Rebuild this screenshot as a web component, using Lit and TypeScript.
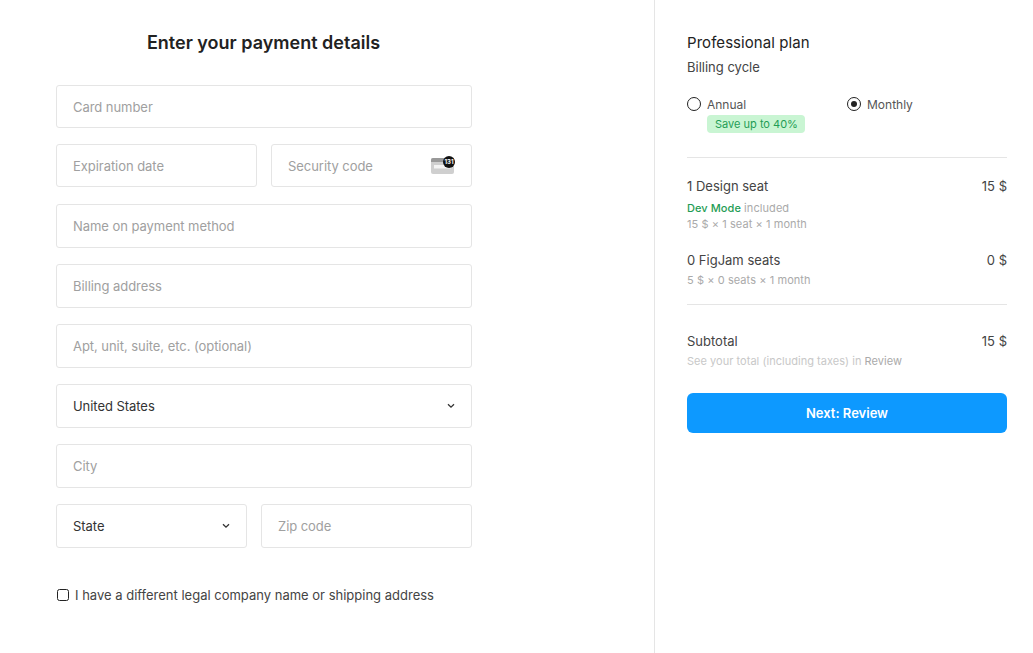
import { LitElement, html, css } from "lit";
import { customElement } from "lit/decorators.js";

const chevron = html`<svg class="chev" width="8" height="6" viewBox="0 0 8 6"><path d="M1 1.2 L4 4.2 L7 1.2" fill="none" stroke="#333" stroke-width="1.3"/></svg>`;

@customElement("app-root")
export class AppRoot extends LitElement {
  static styles = css`
    :host { display: block; height: 653px; font-family: Inter, "Liberation Sans", sans-serif; color: #333; background: #fff; overflow: hidden; }
    * { box-sizing: border-box; }
    .page { display: flex; height: 653px; }
    .left { width: 655px; flex: none; border-right: 1px solid #e5e5e5; padding: 32px 0 0 56px; }
    h1 { width: 415px; margin: 0 0 31px; font-size: 18px; line-height: 22px; font-weight: 600; text-align: center; color: #222; }
    .form { width: 416px; display: flex; flex-direction: column; }
    .row { display: flex; gap: 14px; margin-bottom: 16px; }
    .row.mid { margin-bottom: 17px; }
    .row.last { margin-bottom: 0; }
    .field { flex: 1; height: 44px; border: 1px solid #e5e5e5; border-radius: 3px; padding: 0 16px; display: flex; align-items: center; justify-content: space-between; font-size: 13px; letter-spacing: -0.05px; color: #333; }
    .field.short { height: 43px; }
    .ph { color: #a0a0a0; }
    .w201 { flex: 0 0 201px; }
    .w191 { flex: 0 0 191px; }
    .sec { width: 24px; height: 19px; flex: none; }
    .check { display: flex; align-items: center; gap: 6px; margin-top: 39px; font-size: 13px; color: #444; padding-left: 1px; }
    .box { width: 12px; height: 12px; border: 1.5px solid #222; border-radius: 2.5px; flex: none; }
    .right { flex: none; width: 352px; padding: 33px 0 0 32px; font-size: 13px; }
    .inner { width: 320px; }
    h2 { margin: 0; font-size: 15px; line-height: 20px; font-weight: 400; letter-spacing: 0.06px; color: #222; }
    .cycle { margin-top: 4px; line-height: 20px; font-size: 13px; color: #444; }
    .radios { display: flex; margin-top: 19px; }
    .radio-col { width: 160px; }
    .radio { display: flex; align-items: center; gap: 6px; height: 16px; font-size: 12px; color: #555; }
    .dot { width: 14px; height: 14px; border: 1.5px solid #222; border-radius: 50%; flex: none; display: flex; align-items: center; justify-content: center; }
    .dot i { display: block; width: 6px; height: 6px; background: #222; border-radius: 50%; }
    .save { display: inline-block; width: 98px; margin: 3px 0 0 20px; height: 18px; line-height: 18px; padding: 0 8px; font-size: 11px; white-space: nowrap; background: #c9f5d3; color: #1f9d55; border-radius: 4px; }
    hr { border: 0; border-top: 1px solid #e5e5e5; margin: 0; }
    .sep1 { margin-top: 24px; }
    .item { display: flex; justify-content: space-between; line-height: 18px; color: #444; }
    .item1 { margin-top: 19px; }
    .note { font-size: 11px; line-height: 16px; color: #aaa; letter-spacing: 0.07px; }
    .note b { font-weight: 500; color: #1f9d55; }
    .mt5 { margin-top: 5px; }
    .mt3 { margin-top: 3px; }
    .item2 { margin-top: 19px; }
    .sep2 { margin-top: 16px; }
    .item3 { margin-top: 27px; }
    .note.light { color: #c8c8c8; margin-top: 3px; letter-spacing: 0.03px; }
    .note.light span { color: #aaa; }
    .btn { margin-top: 24px; height: 40px; border-radius: 6px; background: #0d99ff; color: #fff; font-weight: 600; font-size: 13px; display: flex; align-items: center; justify-content: center; }
  `;

  render() {
    return html`<div class="page">
      <div class="left">
        <h1>Enter your payment details</h1>
        <div class="form">
          <div class="row"><div class="field short"><span class="ph">Card number</span></div></div>
          <div class="row mid">
            <div class="field short w201"><span class="ph">Expiration date</span></div>
            <div class="field short"><span class="ph">Security code</span>
              <svg class="sec" viewBox="0 0 24 19">
                <rect x="0" y="2" width="23" height="16" rx="2" fill="#cfcfcf"/>
                <path d="M0 6 V4 a2 2 0 0 1 2-2 H23 V6 Z" fill="#999"/>
                <rect x="3" y="9" width="17" height="3.5" fill="#f4f4f4"/>
                <circle cx="18" cy="6" r="6" fill="#111"/>
                <text x="18" y="8.2" font-size="6" font-weight="700" fill="#fff" text-anchor="middle">131</text>
              </svg>
            </div>
          </div>
          <div class="row"><div class="field"><span class="ph">Name on payment method</span></div></div>
          <div class="row"><div class="field"><span class="ph">Billing address</span></div></div>
          <div class="row"><div class="field"><span class="ph">Apt, unit, suite, etc. (optional)</span></div></div>
          <div class="row"><div class="field"><span>United States</span>${chevron}</div></div>
          <div class="row"><div class="field"><span class="ph">City</span></div></div>
          <div class="row last">
            <div class="field w191"><span>State</span>${chevron}</div>
            <div class="field"><span class="ph">Zip code</span></div>
          </div>
          <div class="check"><span class="box"></span><span>I have a different legal company name or shipping address</span></div>
        </div>
      </div>
      <div class="right"><div class="inner">
        <h2>Professional plan</h2>
        <div class="cycle">Billing cycle</div>
        <div class="radios">
          <div class="radio-col">
            <div class="radio"><span class="dot"></span>Annual</div>
            <span class="save">Save up to 40%</span>
          </div>
          <div class="radio-col">
            <div class="radio"><span class="dot"><i></i></span>Monthly</div>
          </div>
        </div>
        <hr class="sep1" />
        <div class="item item1"><span>1 Design seat</span><span>15 $</span></div>
        <div class="note mt5"><b>Dev Mode</b> included</div>
        <div class="note">15 $ × 1 seat × 1 month</div>
        <div class="item item2"><span>0 FigJam seats</span><span>0 $</span></div>
        <div class="note mt3">5 $ × 0 seats × 1 month</div>
        <hr class="sep2" />
        <div class="item item3"><span>Subtotal</span><span>15 $</span></div>
        <div class="note light">See your total (including taxes) in <span>Review</span></div>
        <div class="btn">Next: Review</div>
      </div></div>
    </div>`;
  }
}
